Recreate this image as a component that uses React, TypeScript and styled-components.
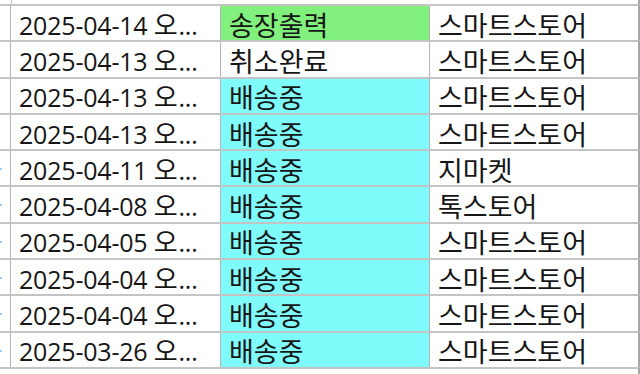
import React from 'react';
import styled, { createGlobalStyle } from 'styled-components';

type Status = 'print' | 'cancel' | 'shipping';

const rows: { date: string; status: Status; label: string; channel: string }[] = [
  { date: '2025-04-14', status: 'print', label: '송장출력', channel: '스마트스토어' },
  { date: '2025-04-13', status: 'cancel', label: '취소완료', channel: '스마트스토어' },
  { date: '2025-04-13', status: 'shipping', label: '배송중', channel: '스마트스토어' },
  { date: '2025-04-13', status: 'shipping', label: '배송중', channel: '스마트스토어' },
  { date: '2025-04-11', status: 'shipping', label: '배송중', channel: '지마켓' },
  { date: '2025-04-08', status: 'shipping', label: '배송중', channel: '톡스토어' },
  { date: '2025-04-05', status: 'shipping', label: '배송중', channel: '스마트스토어' },
  { date: '2025-04-04', status: 'shipping', label: '배송중', channel: '스마트스토어' },
  { date: '2025-04-04', status: 'shipping', label: '배송중', channel: '스마트스토어' },
  { date: '2025-03-26', status: 'shipping', label: '배송중', channel: '스마트스토어' },
];

const statusColor: Record<Status, string> = {
  print: '#82f07c',
  cancel: '#ffffff',
  shipping: '#80fbfb',
};

function App() {
  return (
    <>
      <GlobalStyle />
      <Sheet>
        <TopStrip />
        {rows.map((r, i) => (
          <Row key={i}>
            <Stub>{i >= 4 && <Dot />}</Stub>
            <DateCell>
              <span>
                {r.date} <Ko>오</Ko>...
              </span>
            </DateCell>
            <TextCell $bg={statusColor[r.status]}>{r.label}</TextCell>
            <TextCell>{r.channel}</TextCell>
          </Row>
        ))}
        <Row $tail />
      </Sheet>
    </>
  );
}

const GlobalStyle = createGlobalStyle`
  html, body {
    margin: 0;
    padding: 0;
    background: #ffffff;
  }
  body {
    width: 640px;
    height: 374px;
    overflow: hidden;
    font-family: "Open Sans", "Noto Sans CJK KR", sans-serif;
  }
`;

const Sheet = styled.div`
  width: 640px;
  height: 374px;
  overflow: hidden;
  display: flex;
  flex-direction: column;
`;

const TopStrip = styled.div`
  height: 4px;
  flex: none;
  border-right: 2px solid #a8a8a8;
  background: linear-gradient(to right, transparent 11px, #c4c4c4 11px, #c4c4c4 12px, transparent 12px);
`;

const Row = styled.div<{ $tail?: boolean }>`
  flex: none;
  height: ${(p) => (p.$tail ? '10px' : '36.3px')};
  box-sizing: border-box;
  display: grid;
  grid-template-columns: 11px 210px 209px 208px;
  border-top: 2px solid #c4c4c4;
  border-right: 2px solid #a8a8a8;
`;

const Stub = styled.div`
  position: relative;
  border-right: 1px solid #b4b4b4;
`;

const Dot = styled.span`
  position: absolute;
  left: 0;
  top: 17px;
  width: 2px;
  height: 2px;
  background: #9ccaf0;
`;

const Cell = styled.div<{ $bg?: string }>`
  background: ${(p) => p.$bg ?? '#ffffff'};
  border-right: 1px solid #b4b4b4;
  padding: 2px 0 0 8px;
  box-sizing: border-box;
  display: flex;
  align-items: center;
  color: #161616;
  white-space: nowrap;
  line-height: 1;
  &:last-child {
    border-right: none;
  }
`;

const DateCell = styled(Cell)`
  font-size: 25px;
  letter-spacing: -0.2px;
`;

const Ko = styled.span`
  font-family: "Noto Sans CJK KR", sans-serif;
  font-size: 26px;
  margin-right: 1px;
`;

const TextCell = styled(Cell)`
  font-family: "Noto Sans CJK KR", sans-serif;
  font-size: 27px;
`;

export default App;
